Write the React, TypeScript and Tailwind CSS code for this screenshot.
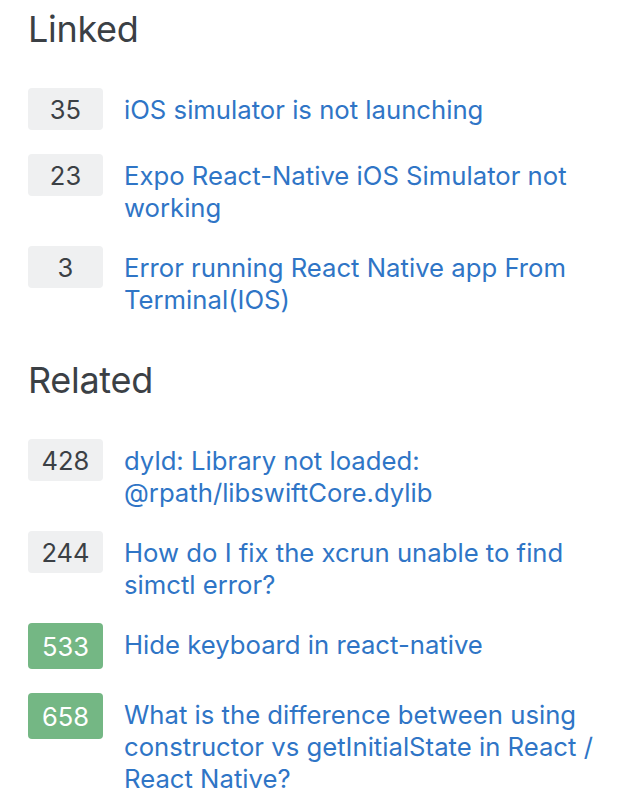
import React from "react";

type Item = { votes: number; title: string; accepted?: boolean };

const linked: Item[] = [
  { votes: 35, title: "iOS simulator is not launching" },
  { votes: 23, title: "Expo React-Native iOS Simulator not working" },
  { votes: 3, title: "Error running React Native app From Terminal(IOS)" },
];

const related: Item[] = [
  { votes: 428, title: "dyld: Library not loaded: @rpath/libswiftCore.dylib" },
  { votes: 244, title: "How do I fix the xcrun unable to find simctl error?" },
  { votes: 533, title: "Hide keyboard in react-native", accepted: true },
  {
    votes: 658,
    title:
      "What is the difference between using constructor vs getInitialState in React / React Native?",
    accepted: true,
  },
];

function Row({ item }: { item: Item }) {
  return (
    <div className="flex items-start gap-[21px]">
      <div
        className={
          item.accepted
            ? "flex h-[46px] w-[75px] shrink-0 items-center justify-center rounded-[4px] bg-[#74b784] pt-[2px] text-[25.5px] text-white"
            : "flex h-[42px] w-[75px] shrink-0 items-center justify-center rounded-[4px] bg-[#eff0f1] pt-[2px] text-[25.5px] text-[#3b4045]"
        }
      >
        {item.votes}
      </div>
      <a
        href="#"
        className="-mb-[2px] block pt-[6px] text-[25.7px] leading-[32px] text-[#2f75c6]"
      >
        {item.title}
      </a>
    </div>
  );
}

function Section({ title, items, top }: { title: string; items: Item[]; top: string }) {
  return (
    <section className={top}>
      <h2 className="text-[36px] leading-[44px] tracking-[-0.3px] text-[#3b4045] font-normal">
        {title}
      </h2>
      <div className="mt-[37px] flex flex-col gap-[24px]">
        {items.map((it) => (
          <Row key={it.votes} item={it} />
        ))}
      </div>
    </section>
  );
}

export default function App() {
  return (
    <div
      className="min-h-[810px] w-[626px] bg-white pl-[28px] pr-[20px] pt-[7px]"
      style={{ fontFamily: "Inter, 'Noto Sans', sans-serif" }}
    >
      <Section title="Linked" items={linked} top="" />
      <Section title="Related" items={related} top="mt-[44px]" />
    </div>
  );
}
